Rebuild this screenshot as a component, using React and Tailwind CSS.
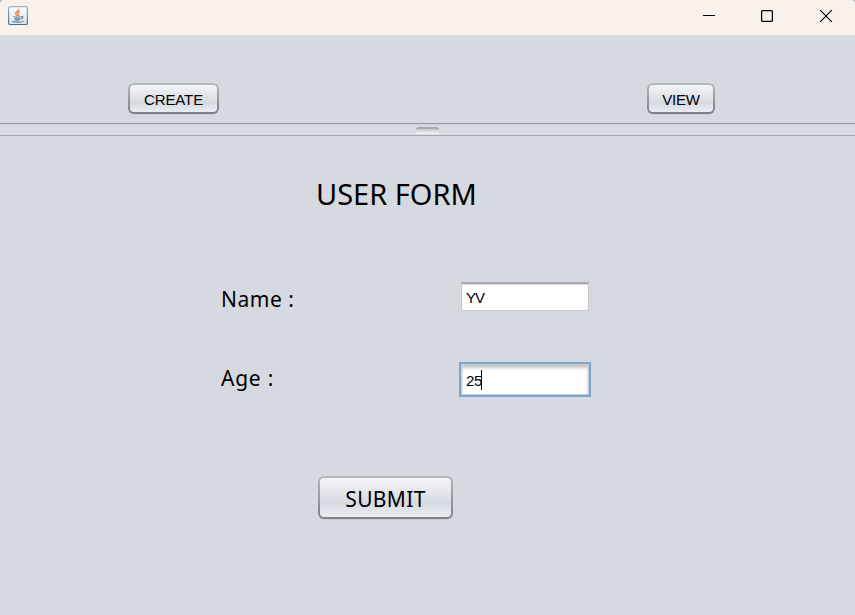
const uiFont = "font-['Liberation_Sans',Arial,sans-serif]";
const labelFont = "font-['Noto_Sans','Open_Sans',sans-serif]";

function JavaIcon() {
  return (
    <svg width="20" height="20" viewBox="0 0 20 20" fill="none" className="shrink-0">
      <defs>
        <linearGradient id="tile" x1="0" y1="0" x2="0" y2="1">
          <stop offset="0" stopColor="#fbfcfc" />
          <stop offset="1" stopColor="#dfe4e7" />
        </linearGradient>
        <linearGradient id="edge" x1="0" y1="0" x2="0" y2="1">
          <stop offset="0" stopColor="#9db4c3" />
          <stop offset="1" stopColor="#47718c" />
        </linearGradient>
      </defs>
      <rect x="0.6" y="0.6" width="18.8" height="17.9" rx="1.6" fill="url(#tile)" stroke="url(#edge)" strokeWidth="1.2" />
      <path d="M10.8 3C11.2 5 7 6 7.8 8c.3.8 1 1.2 1.5 1.9M12 5.8c-2 .8-2.6 1.8-1.8 2.7.5.6.2 1.2-.5 1.7" stroke="#e98b48" strokeWidth="1.5" />
      <path d="M5.5 10.5c1.8.7 6 .7 7.8 0M6.4 12.2c1.8.6 4.6.6 6 0M7 13.6c1.3.5 3.5.5 4.6 0M13.2 10.6c2.2-.6 2.2 1.7-.2 2.2M4 15.2c2 1.2 9 1.2 11.5 0" stroke="#6689a0" strokeWidth="1.2" />
    </svg>
  );
}

function TitleBar() {
  return (
    <header className="h-[35px] shrink-0 bg-[#b4b4b6]">
      <div className="flex h-full justify-between rounded-t-[4px] bg-[#f9f1eb]">
        <div className="pt-[6px] pl-2">
          <JavaIcon />
        </div>
        <div className="flex gap-[45px] pt-[9px] pr-[22px] text-black">
          <svg width="14" height="14" viewBox="0 0 14 14" fill="none" stroke="currentColor" className="mr-[-1px]">
            <path d="M1 6.5h12" />
          </svg>
          <svg width="14" height="14" viewBox="0 0 14 14" fill="none" stroke="currentColor">
            <rect x="1.6" y="1.6" width="10.8" height="10.8" rx="1" strokeWidth="1.25" />
          </svg>
          <svg width="14" height="14" viewBox="0 0 14 14" fill="none" stroke="currentColor">
            <path d="M1.2 1.2l11.6 11.6M12.8 1.2L1.2 12.8" strokeWidth="1.15" />
          </svg>
        </div>
      </div>
    </header>
  );
}

function Button({ className, children }) {
  return (
    <button
      className={
        "rounded-[6px] bg-linear-to-b from-[#b4b6bb] to-[#7d7f84] p-[2px] text-black shadow-[0_1px_0_#cccfd5] " + className
      }
    >
      <span className="flex h-full w-full items-center justify-center rounded-[4px] bg-linear-to-b from-[#f4f5f7] from-0% via-[#d7dae1] via-65% to-[#e9ecf1] to-100%">
        {children}
      </span>
    </button>
  );
}

function Divider() {
  return (
    <div className="flex h-[13px] shrink-0 justify-center border-t border-b border-t-[#9297a1] border-b-[#a4a8b1] bg-linear-to-b from-[#cfd2d9] via-[#d6d9df] via-20% to-[#dadde3]">
      <div className="mt-[3px] h-[7px] w-[23px] rounded-t-[3px] border-t-2 border-t-[#a3a6ae] bg-linear-to-b from-[#c6c9cf] to-[#f3f3f4]" />
    </div>
  );
}

export default function App() {
  return (
    <div className="flex h-[615px] w-[855px] flex-col overflow-hidden bg-[#d6d9e0] text-black">
      <TitleBar />
      <nav className={"flex h-[88px] shrink-0 items-start justify-between pt-[48px] pr-[140px] pl-[128px] text-[15px] " + uiFont}>
        <Button className="h-[31px] w-[91px]">
          <span className="pt-[3px] tracking-[-0.1px]">CREATE</span>
        </Button>
        <Button className="h-[31px] w-[68px]">
          <span className="pt-[3px] tracking-[-0.2px]">VIEW</span>
        </Button>
      </nav>
      <Divider />
      <main className={"flex flex-1 flex-col " + labelFont}>
        <h1 className="mt-[38px] ml-[316px] h-[40px] text-[29px] leading-[40px] whitespace-nowrap">USER FORM</h1>
        <div className="mt-[68px] flex h-[30px] items-start">
          <label className="ml-[221px] w-[240px] shrink-0 pt-[2px] text-[21px] leading-[30px] tracking-[0.5px]">Name :</label>
          <div className={"h-[29px] w-[128px] border border-t-2 border-[#c5c7cb] border-t-[#a9aaad] bg-white pl-1 text-[15px] leading-[28px] tracking-[-0.9px] shadow-[inset_0_1px_1px_#d4d4d4] " + uiFont}>YV</div>
        </div>
        <div className="mt-[49px] flex h-[36px] items-start">
          <label className="ml-[221px] w-[238px] shrink-0 pt-[2px] text-[21px] leading-[30px] tracking-[0.75px]">Age :</label>
          <div className="mt-px h-[35px] w-[132px] border-2 border-[#79a5d0] bg-[#c9cdd2] p-px">
            <div className={"flex h-full items-center bg-white pl-[4px] text-[15px] tracking-[-0.4px] shadow-[inset_0_3px_3px_#c8c8c8] " + uiFont}>
              <span className="pt-[3px]">25</span>
              <span className="ml-[-1px] h-[20px] w-px bg-black" />
            </div>
          </div>
        </div>
        <Button className="mt-[79px] ml-[318px] h-[43px] w-[135px] shrink-0 text-[21px]">
          <span className="pt-[4px] tracking-[0.35px]">SUBMIT</span>
        </Button>
      </main>
    </div>
  );
}
